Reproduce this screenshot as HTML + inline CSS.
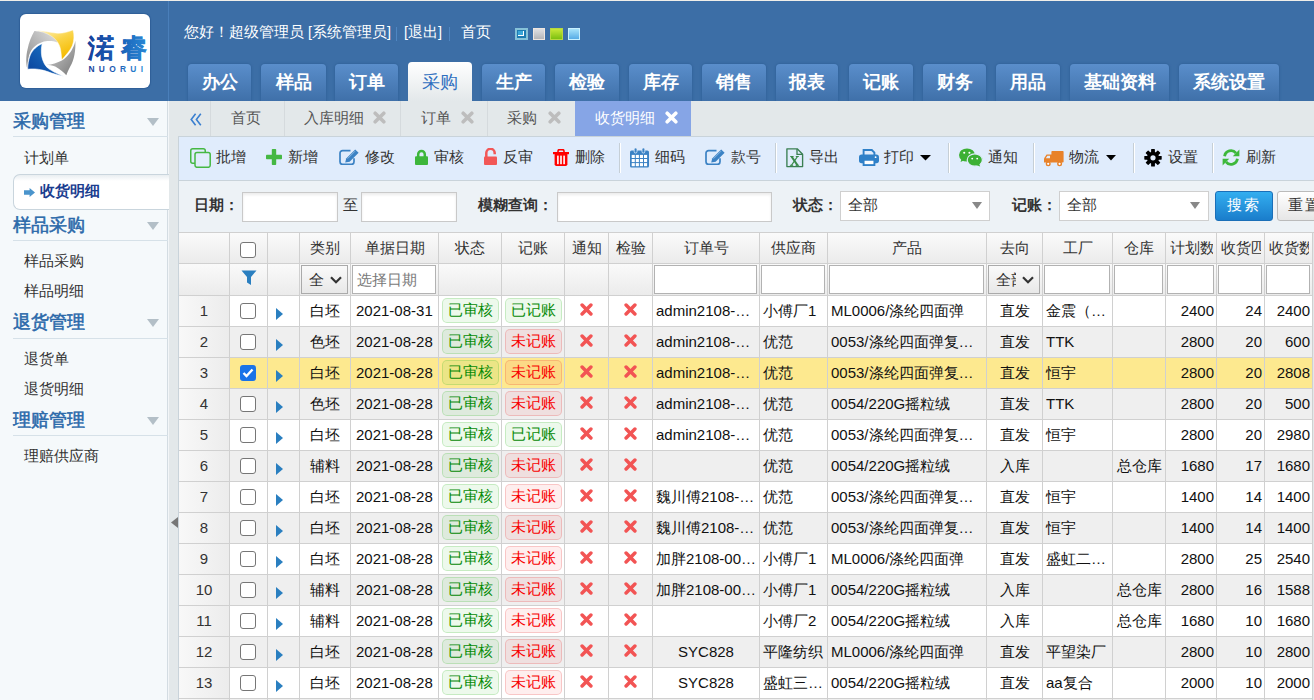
<!DOCTYPE html><html><head><meta charset="utf-8"><style>
*{box-sizing:border-box}
html,body{margin:0;padding:0}
body{width:1314px;height:700px;overflow:hidden;position:relative;font-family:"Liberation Sans",sans-serif;background:#e3e8ea;color:#333}
div,span{position:absolute;white-space:nowrap}
#hdr{left:0;top:0;width:1314px;height:101px;background:#3c6ea6;border-top:1px solid #f0eee9}
#logo{left:20px;top:14px;width:130px;height:74px;background:#fff;border-radius:6px;box-shadow:0 0 1px 1px #2f5f98}
#hsep{left:168px;top:1px;width:1px;height:100px;background:#4a7fba}
.g{top:23px;font-size:14.5px;color:#fff;line-height:18px}
.gs{top:27px;width:1px;height:14px;background:#4f86c2}
.nt{top:64px;height:37px;border-radius:4px 4px 0 0;background:linear-gradient(#5a8ecb,#3f70a9);box-shadow:0 0 2px 1px #34659c;color:#fff;font-size:18px;font-weight:bold;font-family:"Liberation Serif",serif;text-align:center;line-height:36px}
.nt.act{top:62px;height:39px;background:linear-gradient(#fff,#e3e8ea);color:#2f6fc0;font-weight:normal;box-shadow:none;line-height:40px}
#side{left:0;top:101px;width:168px;height:599px;background:#f5f9fb;border-right:1px solid #d3dce2}
.sh{left:13px;font-size:18px;color:#2b69aa;line-height:20px;-webkit-text-stroke:0.55px #2b69aa}
.sline{left:13px;width:155px;height:1px;background:#d6e1e8}
.scaret{left:147px;width:0;height:0;border-left:6.5px solid transparent;border-right:6.5px solid transparent;border-top:8px solid #b3bfc7}
.si{left:24px;font-size:14.5px;color:#333;line-height:18px}
#sact{left:13px;top:174px;width:156px;height:36px;background:linear-gradient(#e9eef1 0,#fff 6px,#fff 100%);border:1px solid #c9d5dd;border-right:none;border-radius:7px 0 0 7px}
.pt{top:109px;font-size:14.5px;color:#555;line-height:18px}
.ptx{top:111px;font-size:17px;color:#b3b3b3;font-weight:bold;line-height:14px}
.psep{top:101px;width:1px;height:35px;background:#d5dadd}
#tb{left:178px;top:136px;width:1136px;height:45px;background:#e0ecfc;border-top:1px solid #c9d3da;border-bottom:1px solid #c9d3da;border-left:1px solid #c9d3da}
.tt{top:148px;font-size:14.5px;color:#333;line-height:18px}
.tsep{top:143px;width:2px;height:30px;border-left:1px solid #c6cfd6;border-right:1px solid #fff}
#sb{left:178px;top:181px;width:1136px;height:52px;background:#edf2f6;border-left:1px solid #c9d3da;border-bottom:1px solid #c9d3da}
.lb{top:196px;font-size:14.5px;color:#333;font-weight:bold;line-height:18px}
.inp{top:192px;height:30px;background:#fff;border:1px solid #c9c9c9;box-shadow:inset 0 2px 3px rgba(0,0,0,.08)}
.sel{top:191px;height:30px;background:#fff;border:1px solid #cfcfcf}
.selt{top:196px;font-size:14.5px;color:#333;line-height:18px}
.selc{top:202px;width:0;height:0;border-left:5px solid transparent;border-right:5px solid transparent;border-top:7px solid #888}
.c{height:31px;border-right:1px solid #d0d0d0;border-bottom:1px solid #d0d0d0;font-size:15px;line-height:30px;color:#111;overflow:hidden;padding:0 3px}
.hc{background:linear-gradient(#fafafa,#ebebeb);color:#333;text-align:center}
.rn{background:linear-gradient(90deg,#f8f8f8,#ececec);color:#333;text-align:center}
.cb{width:16px;height:16px;border:1.5px solid #767676;border-radius:3px;background:#fff}
.tri{width:0;height:0;border-top:6px solid transparent;border-bottom:6px solid transparent;border-left:7px solid #2a7fc0}
.bd{height:25px;top:2px;border-radius:5px;font-size:15px;line-height:22px;text-align:center}
.ok{background:rgba(60,190,40,.09);border:1px solid rgba(60,180,40,.22);color:#058a05}
.no{background:rgba(240,40,40,.08);border:1px solid rgba(230,40,40,.2);color:#f80000}
.fi{top:1px;height:29px;background:#fff;border:1px solid #b2b2b2}
</style></head><body>
<div id="hdr"></div><div id="logo"></div><div id="hsep"></div>
<svg style="position:absolute;left:20px;top:15px" width="130" height="73" viewBox="20 15 130 73"><defs><linearGradient id="gy" x1="0" y1="0" x2="0.6" y2="1"><stop offset="0" stop-color="#fff4c8"/><stop offset="0.5" stop-color="#fad448"/><stop offset="1" stop-color="#f5bb00"/></linearGradient><linearGradient id="gg" x1="1" y1="0" x2="0" y2="1"><stop offset="0" stop-color="#e0e0e0"/><stop offset="1" stop-color="#8a8a8a"/></linearGradient><linearGradient id="gg2" x1="0" y1="0" x2="1" y2="1"><stop offset="0" stop-color="#d8d8d8"/><stop offset="1" stop-color="#787878"/></linearGradient><linearGradient id="gb" x1="1" y1="0" x2="0" y2="1"><stop offset="0" stop-color="#1e7fd0"/><stop offset="1" stop-color="#0a3f98"/></linearGradient><linearGradient id="gt" x1="0" y1="0" x2="1" y2="0"><stop offset="0" stop-color="#16409a"/><stop offset="0.45" stop-color="#1a5cb4"/><stop offset="1" stop-color="#2a92dc"/></linearGradient></defs><path d="M34.4 31.1C40 31.5 50 32 53.7 35.9C56 38 57 40.5 57.2 42.4C53 40.5 46 40.8 42.6 41.9C36 44 31 49 29.2 55C28 59 27.5 64 27.3 68.6C26 64 25.9 56 27.5 49.5C29 42 31.5 36 34.4 31.1Z" fill="url(#gg)"/><path d="M34.4 30.3C42 30.5 50 32.5 57.4 33.3C63 33.5 68 32 73 30C74.5 35 74 41 72.3 45.6C70.5 50 66 55 61.9 59.7C61.3 55 61 51 60.4 48.5C59.5 44.5 57 40 52.2 36.7C47 33 40 31 34.4 30.3Z" fill="url(#gy)" stroke="#fff" stroke-width="0.4"/><path d="M75.3 40.4C76 50 74 60 70.5 66C68.5 70 67 73 66.3 75.3C64 72.5 59.5 68.5 55.2 66.4C52 65.2 49 64.9 46.3 64.9C52 64.5 57.5 62.5 61.9 60.4C66 58 70.5 53 72.5 48.5C74 45.5 75 43 75.3 40.4Z" fill="url(#gg2)"/><path d="M42.2 43.7C38 45 32 50 29.9 56C28.5 60 27.7 65 27.7 69.3C32 68.5 38 69 42.6 70.1C48 71.5 54 74.5 64.1 76.4C59 75 52 71 48.5 68.6C45.5 66.5 43 62 41.8 56.7C41 52 41.3 47 42.2 43.7Z" fill="url(#gb)" stroke="#fff" stroke-width="0.6"/><text x="87.5" y="56.5" font-family="Liberation Sans" font-size="26" font-weight="bold" fill="url(#gt)" stroke="url(#gt)" stroke-width="0.35" letter-spacing="7">渃睿</text><text x="88.5" y="72.2" font-family="Liberation Sans" font-size="8.4" font-weight="bold" fill="url(#gt)" letter-spacing="4.3">NUORUI</text></svg>
<div class="g" style="left:184px">您好！超级管理员 [系统管理员]</div>
<div class="gs" style="left:396px"></div>
<div class="g" style="left:404px">[退出]</div>
<div class="gs" style="left:449px"></div>
<div class="g" style="left:461px">首页</div>
<div style="left:0;top:0;width:1314px;height:101px;overflow:hidden">
<div class="nt" style="left:188px;width:63px">办公</div>
<div class="nt" style="left:261px;width:65px">样品</div>
<div class="nt" style="left:335px;width:63px">订单</div>
<div class="nt act" style="left:408px;width:64px">采购</div>
<div class="nt" style="left:482px;width:63px">生产</div>
<div class="nt" style="left:555px;width:64px">检验</div>
<div class="nt" style="left:629px;width:63px">库存</div>
<div class="nt" style="left:702px;width:64px">销售</div>
<div class="nt" style="left:776px;width:62px">报表</div>
<div class="nt" style="left:849px;width:64px">记账</div>
<div class="nt" style="left:923px;width:63px">财务</div>
<div class="nt" style="left:996px;width:64px">用品</div>
<div class="nt" style="left:1070px;width:99px">基础资料</div>
<div class="nt" style="left:1179px;width:100px">系统设置</div>
</div>
<div id="side"></div><div style="left:168px;top:101px;width:1px;height:599px;background:#f3f6f8"></div>
<div class="sh" style="top:111px">采购管理</div><div class="sline" style="top:136px"></div><div class="scaret" style="top:118px"></div>
<div class="sh" style="top:215px">样品采购</div><div class="sline" style="top:240px"></div><div class="scaret" style="top:222px"></div>
<div class="sh" style="top:312px">退货管理</div><div class="sline" style="top:338px"></div><div class="scaret" style="top:319px"></div>
<div class="sh" style="top:410px">理赔管理</div><div class="sline" style="top:435px"></div><div class="scaret" style="top:417px"></div>
<div id="sact"></div>
<div class="si" style="top:149px">计划单</div>
<div class="si" style="top:252px">样品采购</div>
<div class="si" style="top:282px">样品明细</div>
<div class="si" style="top:350px">退货单</div>
<div class="si" style="top:380px">退货明细</div>
<div class="si" style="top:447px">理赔供应商</div>
<svg style="position:absolute;left:24px;top:188px" width="11" height="9" viewBox="0 0 11 9"><path d="M0 2.2H5.6V0L11 4.5L5.6 9V6.8H0Z" fill="#4a94cc"/></svg>
<svg style="position:absolute;left:171px;top:517px" width="7" height="11" viewBox="0 0 7 11"><path d="M7 0V11L0 5.5Z" fill="#777"/></svg>
<div style="left:40px;top:182px;font-size:15px;font-weight:bold;color:#1b3d8f;line-height:18px">收货明细</div>
<div style="left:575px;top:101px;width:116px;height:35px;background:#86a5e6"></div>
<div class="psep" style="left:210px"></div>
<div class="psep" style="left:284px"></div>
<div class="psep" style="left:400px"></div>
<div class="psep" style="left:487px"></div>
<div class="pt" style="left:231px">首页</div>
<div class="pt" style="left:304px">入库明细</div>
<div class="pt" style="left:421px">订单</div>
<div class="pt" style="left:507px">采购</div>
<div class="pt" style="left:595px;color:#fff">收货明细</div>
<div id="tb"></div>
<div class="tt" style="left:216px">批增</div>
<div class="tt" style="left:288px">新增</div>
<div class="tt" style="left:365px">修改</div>
<div class="tt" style="left:434px">审核</div>
<div class="tt" style="left:503px">反审</div>
<div class="tt" style="left:575px">删除</div>
<div class="tt" style="left:655px">细码</div>
<div class="tt" style="left:731px">款号</div>
<div class="tt" style="left:809px">导出</div>
<div class="tt" style="left:884px">打印</div>
<div class="tt" style="left:988px">通知</div>
<div class="tt" style="left:1069px">物流</div>
<div class="tt" style="left:1168px">设置</div>
<div class="tt" style="left:1246px">刷新</div>
<div class="tsep" style="left:619px"></div>
<div class="tsep" style="left:775px"></div>
<div class="tsep" style="left:948px"></div>
<div class="tsep" style="left:1033px"></div>
<div class="tsep" style="left:1133px"></div>
<div class="tsep" style="left:1212px"></div>
<svg style="position:absolute;left:190px;top:148px" width="21" height="20" viewBox="0 0 21 20"><rect x="0.75" y="0.75" width="14.5" height="14.5" rx="2" fill="none" stroke="#45b843" stroke-width="1.5"/><rect x="5" y="4.5" width="15.2" height="14.8" rx="2" fill="#e0ecfc" stroke="#45b843" stroke-width="1.5"/></svg>
<svg style="position:absolute;left:266px;top:149px" width="16" height="16" viewBox="0 0 16 16"><rect x="5.8" y="0" width="4.4" height="16" rx="0.8" fill="#45b843"/><rect x="0" y="5.8" width="16" height="4.4" rx="0.8" fill="#45b843"/></svg>
<svg style="position:absolute;left:339px;top:149px" width="20" height="16" viewBox="0 0 20 16"><path d="M11.5 1.6H3.6A2.6 2.6 0 0 0 1 4.2V12.8A2.6 2.6 0 0 0 3.6 15.4H12.4A2.6 2.6 0 0 0 15 12.8V9.2" stroke="#3b82c4" stroke-width="1.7" fill="none"/><path d="M6.2 13.4L7.2 9.4L16.2 0.4L19.6 3.8L10.6 12.8Z" fill="#3b82c4"/><path d="M8.6 9.6L16 2.2" stroke="#9cc3e6" stroke-width="0.8"/></svg>
<svg style="position:absolute;left:705px;top:149px" width="20" height="16" viewBox="0 0 20 16"><path d="M11.5 1.6H3.6A2.6 2.6 0 0 0 1 4.2V12.8A2.6 2.6 0 0 0 3.6 15.4H12.4A2.6 2.6 0 0 0 15 12.8V9.2" stroke="#3b82c4" stroke-width="1.7" fill="none"/><path d="M6.2 13.4L7.2 9.4L16.2 0.4L19.6 3.8L10.6 12.8Z" fill="#3b82c4"/><path d="M8.6 9.6L16 2.2" stroke="#9cc3e6" stroke-width="0.8"/></svg>
<svg style="position:absolute;left:415px;top:149px" width="13" height="16" viewBox="0 0 13 16"><path d="M3.2 8V5.3A3.3 3.3 0 0 1 9.8 5.3V8" stroke="#3db63b" stroke-width="2.5" fill="none"/><rect x="0" y="7.3" width="13" height="8.7" rx="1" fill="#3db63b"/></svg>
<svg style="position:absolute;left:484px;top:148px" width="13" height="17" viewBox="0 0 13 17"><path d="M2.3 9.5V5A4.2 4.2 0 0 1 10.7 5V6.3" stroke="#f25757" stroke-width="2.5" fill="none"/><rect x="0" y="8.6" width="13" height="8.4" rx="1" fill="#f25757"/></svg>
<svg style="position:absolute;left:553px;top:149px" width="16" height="17" viewBox="0 0 16 17"><path d="M5 3.2V2.2A1.6 1.6 0 0 1 6.6 0.6H9.4A1.6 1.6 0 0 1 11 2.2V3.2" stroke="#f00" stroke-width="1.6" fill="none"/><rect x="0" y="3" width="16" height="2.2" fill="#f00"/><path d="M1.6 5H14.4V15.2A1.8 1.8 0 0 1 12.6 17H3.4A1.8 1.8 0 0 1 1.6 15.2Z" fill="#f00"/><rect x="4.1" y="6.6" width="1.6" height="8.6" fill="#fff"/><rect x="7.2" y="6.6" width="1.6" height="8.6" fill="#fff"/><rect x="10.3" y="6.6" width="1.6" height="8.6" fill="#fff"/></svg>
<svg style="position:absolute;left:630px;top:148px" width="19" height="20" viewBox="0 0 19 20"><rect x="0" y="2.6" width="19" height="17" rx="1.6" fill="#3b82c4"/><rect x="4.2" y="0" width="2.8" height="5" rx="1.3" fill="#3b82c4" stroke="#e0ecfc" stroke-width="0.8"/><rect x="12" y="0" width="2.8" height="5" rx="1.3" fill="#3b82c4" stroke="#e0ecfc" stroke-width="0.8"/><rect x="1.7" y="6.9" width="3.1" height="3.1" fill="#fff"/><rect x="5.8" y="6.9" width="3.1" height="3.1" fill="#fff"/><rect x="9.9" y="6.9" width="3.1" height="3.1" fill="#fff"/><rect x="14.0" y="6.9" width="3.1" height="3.1" fill="#fff"/><rect x="1.7" y="11.0" width="3.1" height="3.1" fill="#fff"/><rect x="5.8" y="11.0" width="3.1" height="3.1" fill="#fff"/><rect x="9.9" y="11.0" width="3.1" height="3.1" fill="#fff"/><rect x="14.0" y="11.0" width="3.1" height="3.1" fill="#fff"/><rect x="1.7" y="15.1" width="3.1" height="3.1" fill="#fff"/><rect x="5.8" y="15.1" width="3.1" height="3.1" fill="#fff"/><rect x="9.9" y="15.1" width="3.1" height="3.1" fill="#fff"/><rect x="14.0" y="15.1" width="3.1" height="3.1" fill="#fff"/></svg>
<svg style="position:absolute;left:786px;top:148px" width="18" height="20" viewBox="0 0 18 20"><path d="M0.9 0.8H11.2L16.6 6.2V18.6H0.9Z" fill="none" stroke="#3a7f52" stroke-width="1.35" stroke-linejoin="round"/><path d="M11 0.9V6.4H16.6" fill="none" stroke="#3a7f52" stroke-width="1.3"/><path d="M5.6 8.6L11.6 17.4" stroke="#3a8a4a" stroke-width="1.9"/><path d="M11.4 8.6L5.4 17.4" stroke="#3a8a4a" stroke-width="1.1"/><path d="M4.2 8.5H7.6M9.8 8.5H12.8M3.9 17.3H7.2M9.6 17.3H13.1" stroke="#3a8a4a" stroke-width="1"/></svg>
<svg style="position:absolute;left:859px;top:149px" width="20" height="17" viewBox="0 0 20 17"><path d="M4.6 6V1H12.8L15.4 3.6V6" fill="none" stroke="#2f80c8" stroke-width="1.9"/><rect x="0" y="5.6" width="20" height="8.6" rx="2.6" fill="#2f80c8"/><rect x="4.6" y="10.8" width="10.8" height="5.3" fill="#fff" stroke="#2f80c8" stroke-width="1.9"/><circle cx="16.6" cy="8.2" r="0.9" fill="#fff"/></svg>
<svg style="position:absolute;left:920px;top:155px" width="11" height="6" viewBox="0 0 11 6"><path d="M0 0H11L5.5 5.6Z" fill="#000"/></svg>
<svg style="position:absolute;left:1106px;top:155px" width="10" height="6" viewBox="0 0 10 6"><path d="M0 0H10L5 5.4Z" fill="#000"/></svg>
<svg style="position:absolute;left:959px;top:148px" width="24" height="19" viewBox="0 0 24 19"><ellipse cx="8" cy="7" rx="8" ry="6.6" fill="#3cb034"/><path d="M2.5 10.5L1.6 14L6 11.8Z" fill="#3cb034"/><ellipse cx="15.8" cy="12" rx="7.6" ry="6.2" fill="#3cb034" stroke="#e0ecfc" stroke-width="1.2"/><path d="M20 15.5L21.2 18.6L17 17Z" fill="#3cb034"/><circle cx="5.2" cy="4.8" r="1.05" fill="#fff"/><circle cx="10.4" cy="4.8" r="1.05" fill="#fff"/><circle cx="13.2" cy="10.6" r="0.95" fill="#fff"/><circle cx="18.2" cy="10.6" r="0.95" fill="#fff"/></svg>
<svg style="position:absolute;left:1044px;top:151px" width="20" height="16" viewBox="0 0 20 16"><rect x="7.4" y="0" width="12.2" height="11.6" rx="0.8" fill="#e8822a"/><path d="M0 11.6V7.6L2.6 3.4H8V11.6Z" fill="#e8822a"/><path d="M1.8 7.2L3.4 4.8H6V7.2Z" fill="#e0ecfc"/><circle cx="4.2" cy="12.8" r="2.5" fill="#e8822a"/><circle cx="4.2" cy="12.8" r="1.1" fill="#fff"/><circle cx="15.6" cy="12.8" r="2.5" fill="#e8822a"/><circle cx="15.6" cy="12.8" r="1.1" fill="#fff"/></svg>
<svg style="position:absolute;left:1144px;top:149px" width="18" height="18" viewBox="0 0 18 18"><g transform="translate(9,8.8)"><rect x="-1.9" y="-8.7" width="3.8" height="4.5" rx="0.6" fill="#000" transform="rotate(0)"/><rect x="-1.9" y="-8.7" width="3.8" height="4.5" rx="0.6" fill="#000" transform="rotate(45)"/><rect x="-1.9" y="-8.7" width="3.8" height="4.5" rx="0.6" fill="#000" transform="rotate(90)"/><rect x="-1.9" y="-8.7" width="3.8" height="4.5" rx="0.6" fill="#000" transform="rotate(135)"/><rect x="-1.9" y="-8.7" width="3.8" height="4.5" rx="0.6" fill="#000" transform="rotate(180)"/><rect x="-1.9" y="-8.7" width="3.8" height="4.5" rx="0.6" fill="#000" transform="rotate(225)"/><rect x="-1.9" y="-8.7" width="3.8" height="4.5" rx="0.6" fill="#000" transform="rotate(270)"/><rect x="-1.9" y="-8.7" width="3.8" height="4.5" rx="0.6" fill="#000" transform="rotate(315)"/><circle r="6.1" fill="#000"/><circle r="2.6" fill="#e0ecfc"/></g></svg>
<svg style="position:absolute;left:1222px;top:149px" width="18" height="17" viewBox="0 0 18 17"><path d="M2.6 7.2A6.4 6.4 0 0 1 14 4.2" stroke="#3db83b" stroke-width="2.8" fill="none"/><path d="M17.4 0.6V7.2H10.8Z" fill="#3db83b"/><path d="M15.4 9.8A6.4 6.4 0 0 1 4 12.8" stroke="#3db83b" stroke-width="2.8" fill="none"/><path d="M0.6 16.4V9.8H7.2Z" fill="#3db83b"/></svg>
<svg style="position:absolute;left:373px;top:111px" width="13" height="13" viewBox="0 0 13 13"><path d="M2.2 2.2L10.8 10.8M10.8 2.2L2.2 10.8" stroke="#bdbdbd" stroke-width="3.6" stroke-linecap="round"/></svg>
<svg style="position:absolute;left:461px;top:111px" width="13" height="13" viewBox="0 0 13 13"><path d="M2.2 2.2L10.8 10.8M10.8 2.2L2.2 10.8" stroke="#bdbdbd" stroke-width="3.6" stroke-linecap="round"/></svg>
<svg style="position:absolute;left:548px;top:111px" width="13" height="13" viewBox="0 0 13 13"><path d="M2.2 2.2L10.8 10.8M10.8 2.2L2.2 10.8" stroke="#bdbdbd" stroke-width="3.6" stroke-linecap="round"/></svg>
<svg style="position:absolute;left:665px;top:111px" width="13" height="13" viewBox="0 0 13 13"><path d="M2.2 2.2L10.8 10.8M10.8 2.2L2.2 10.8" stroke="#fff" stroke-width="3.6" stroke-linecap="round"/></svg>
<svg style="position:absolute;left:190px;top:113px" width="12" height="13" viewBox="0 0 12 13"><path d="M5.6 0.8L1.2 6.5L5.6 12.2M10.8 0.8L6.4 6.5L10.8 12.2" stroke="#3a7fd0" stroke-width="1.6" fill="none"/></svg>
<div style="left:515px;top:28px;width:13px;height:12px;background:#1d7cb2;border:2px solid #86c2d8"><div style="left:1px;top:1px;width:6px;height:5px;background:#3aa6d8;border-right:1.5px solid #fff;border-bottom:1.5px solid #fff"></div></div>
<div style="left:533px;top:28px;width:12px;height:12px;background:linear-gradient(#dfe0e3,#b5b6b9);border:1px solid #efe6df"></div>
<div style="left:550px;top:28px;width:13px;height:12px;background:linear-gradient(#c8e838,#7cc010);border:1px solid #b8d840"></div>
<div style="left:568px;top:28px;width:12px;height:12px;background:linear-gradient(#a6e2fa,#56ace6);border:1px solid #c8f0ff"></div>
<div id="sb"></div>
<div class="lb" style="left:194px">日期：</div>
<div class="inp" style="left:242px;width:96px"></div>
<div class="selt" style="left:343px">至</div>
<div class="inp" style="left:361px;width:96px"></div>
<div class="lb" style="left:478px">模糊查询：</div>
<div class="inp" style="left:557px;width:215px"></div>
<div class="lb" style="left:793px">状态：</div>
<div class="sel" style="left:840px;width:150px"></div><div class="selt" style="left:848px">全部</div><div class="selc" style="left:972px"></div>
<div class="lb" style="left:1012px">记账：</div>
<div class="sel" style="left:1059px;width:150px"></div><div class="selt" style="left:1067px">全部</div><div class="selc" style="left:1190px"></div>
<div style="left:1215px;top:191px;width:58px;height:30px;border-radius:3px;background:linear-gradient(#33aef0,#1a7dcb);border:1px solid #1a6fb8;color:#fff;font-size:15px;line-height:26px;text-align:center;letter-spacing:2px">搜索</div>
<div style="left:1277px;top:191px;width:58px;height:30px;border-radius:3px;background:linear-gradient(#fff,#e6e6e6);border:1px solid #bbb;color:#333;font-size:15px;line-height:26px;padding-left:10px;letter-spacing:2px">重置</div>
<div style="left:178px;top:232px;width:1136px;height:1px;background:#d0d0d0"></div>
<div style="left:178px;top:232px;width:1px;height:468px;background:#c9d3da"></div>
<div class="c hc" style="left:179px;top:233px;width:51px;height:31px;"></div>
<div class="c hc" style="left:230px;top:233px;width:38px;height:31px;"><div class="cb" style="left:10px;top:9px"></div></div>
<div class="c hc" style="left:268px;top:233px;width:32px;height:31px;"></div>
<div class="c hc" style="left:300px;top:233px;width:51px;height:31px;">类别</div>
<div class="c hc" style="left:351px;top:233px;width:88px;height:31px;">单据日期</div>
<div class="c hc" style="left:439px;top:233px;width:63px;height:31px;">状态</div>
<div class="c hc" style="left:502px;top:233px;width:63px;height:31px;">记账</div>
<div class="c hc" style="left:565px;top:233px;width:44px;height:31px;">通知</div>
<div class="c hc" style="left:609px;top:233px;width:44px;height:31px;">检验</div>
<div class="c hc" style="left:653px;top:233px;width:107px;height:31px;">订单号</div>
<div class="c hc" style="left:760px;top:233px;width:68px;height:31px;">供应商</div>
<div class="c hc" style="left:828px;top:233px;width:159px;height:31px;">产品</div>
<div class="c hc" style="left:987px;top:233px;width:56px;height:31px;">去向</div>
<div class="c hc" style="left:1043px;top:233px;width:70px;height:31px;">工厂</div>
<div class="c hc" style="left:1113px;top:233px;width:53px;height:31px;">仓库</div>
<div class="c hc" style="left:1166px;top:233px;width:51px;height:31px;"><div style="left:4px;top:0;width:43px;overflow:hidden;text-align:left">计划数</div></div>
<div class="c hc" style="left:1217px;top:233px;width:48px;height:31px;"><div style="left:4px;top:0;width:40px;overflow:hidden;text-align:left">收货匹</div></div>
<div class="c hc" style="left:1265px;top:233px;width:48px;height:31px;"><div style="left:4px;top:0;width:40px;overflow:hidden;text-align:left">收货数</div></div>
<div class="c hc" style="left:179px;top:264px;width:51px;height:32px;"></div>
<div class="c hc" style="left:230px;top:264px;width:38px;height:32px;"><svg style="position:absolute;left:10.5px;top:6px" width="16" height="16" viewBox="0 0 16 16"><path d="M0.5 0.5H15.5L10 7V15L6 12.5V7Z" fill="#2a7fc0"/></svg></div>
<div class="c hc" style="left:268px;top:264px;width:32px;height:32px;"></div>
<div class="c hc" style="left:300px;top:264px;width:51px;height:32px;"><div style="left:1px;top:1px;width:47px;height:29px;border:1px solid #aaa;background:linear-gradient(#fafafa,#e8e8e8);line-height:27px;padding-left:7px;color:#333;text-align:left">全<svg style="position:absolute;left:28px;top:10px" width="12" height="8" viewBox="0 0 12 8"><path d="M1 1.2L6 6.2L11 1.2" stroke="#333" stroke-width="2.2" fill="none"/></svg></div></div>
<div class="c hc" style="left:351px;top:264px;width:88px;height:32px;"><div class="fi" style="left:1px;width:84px;line-height:27px;padding-left:4px;color:#7a7a7a;text-align:left">选择日期</div></div>
<div class="c hc" style="left:439px;top:264px;width:63px;height:32px;"></div>
<div class="c hc" style="left:502px;top:264px;width:63px;height:32px;"></div>
<div class="c hc" style="left:565px;top:264px;width:44px;height:32px;"></div>
<div class="c hc" style="left:609px;top:264px;width:44px;height:32px;"></div>
<div class="c hc" style="left:653px;top:264px;width:107px;height:32px;"><div class="fi" style="left:1px;width:103px"></div></div>
<div class="c hc" style="left:760px;top:264px;width:68px;height:32px;"><div class="fi" style="left:1px;width:64px"></div></div>
<div class="c hc" style="left:828px;top:264px;width:159px;height:32px;"><div class="fi" style="left:1px;width:155px"></div></div>
<div class="c hc" style="left:987px;top:264px;width:56px;height:32px;"><div style="left:1px;top:1px;width:52px;height:29px;border:1px solid #aaa;background:linear-gradient(#fafafa,#e8e8e8);line-height:27px;color:#333;overflow:hidden;text-align:left"><div style="left:7px;top:0;width:20px;overflow:hidden">全部</div><svg style="position:absolute;left:33px;top:10px" width="12" height="8" viewBox="0 0 12 8"><path d="M1 1.2L6 6.2L11 1.2" stroke="#333" stroke-width="2.2" fill="none"/></svg></div></div>
<div class="c hc" style="left:1043px;top:264px;width:70px;height:32px;"><div class="fi" style="left:1px;width:66px"></div></div>
<div class="c hc" style="left:1113px;top:264px;width:53px;height:32px;"><div class="fi" style="left:1px;width:49px"></div></div>
<div class="c hc" style="left:1166px;top:264px;width:51px;height:32px;"><div class="fi" style="left:1px;width:47px"></div></div>
<div class="c hc" style="left:1217px;top:264px;width:48px;height:32px;"><div class="fi" style="left:1px;width:44px"></div></div>
<div class="c hc" style="left:1265px;top:264px;width:48px;height:32px;"><div class="fi" style="left:1px;width:44px"></div></div>
<div class="c rn" style="left:179px;top:296px;width:51px;height:31px;">1</div>
<div class="c " style="left:230px;top:296px;width:38px;height:31px;background:#fff"><div class="cb" style="left:10px;top:7px"></div></div>
<div class="c " style="left:268px;top:296px;width:32px;height:31px;background:#fff"><div class="tri" style="left:8px;top:12px"></div></div>
<div class="c " style="left:300px;top:296px;width:51px;height:31px;background:#fff;text-align:center">白坯</div>
<div class="c " style="left:351px;top:296px;width:88px;height:31px;background:#fff;padding-left:5px">2021-08-31</div>
<div class="c " style="left:439px;top:296px;width:63px;height:31px;background:#fff"><div class="bd ok" style="left:3px;width:57px">已审核</div></div>
<div class="c " style="left:502px;top:296px;width:63px;height:31px;background:#fff"><div class="bd ok" style="left:3px;width:57px">已记账</div></div>
<div class="c " style="left:565px;top:296px;width:44px;height:31px;background:#fff"><svg style="position:absolute;left:15px;top:7px" width="13" height="13" viewBox="0 0 13 13"><path d="M2.1 2.1L10.9 10.9M10.9 2.1L2.1 10.9" stroke="#f25454" stroke-width="3.5" stroke-linecap="round"/></svg></div>
<div class="c " style="left:609px;top:296px;width:44px;height:31px;background:#fff"><svg style="position:absolute;left:15px;top:7px" width="13" height="13" viewBox="0 0 13 13"><path d="M2.1 2.1L10.9 10.9M10.9 2.1L2.1 10.9" stroke="#f25454" stroke-width="3.5" stroke-linecap="round"/></svg></div>
<div class="c " style="left:653px;top:296px;width:107px;height:31px;background:#fff;">admin2108-…</div>
<div class="c " style="left:760px;top:296px;width:68px;height:31px;background:#fff">小傅厂1</div>
<div class="c " style="left:828px;top:296px;width:159px;height:31px;background:#fff">ML0006/涤纶四面弹</div>
<div class="c " style="left:987px;top:296px;width:56px;height:31px;background:#fff;text-align:center">直发</div>
<div class="c " style="left:1043px;top:296px;width:70px;height:31px;background:#fff">金震（…</div>
<div class="c " style="left:1113px;top:296px;width:53px;height:31px;background:#fff;text-align:center"></div>
<div class="c " style="left:1166px;top:296px;width:51px;height:31px;background:#fff;text-align:right;padding-right:2px">2400</div>
<div class="c " style="left:1217px;top:296px;width:48px;height:31px;background:#fff;text-align:right;padding-right:2px">24</div>
<div class="c " style="left:1265px;top:296px;width:48px;height:31px;background:#fff;text-align:right;padding-right:2px">2400</div>
<div class="c rn" style="left:179px;top:327px;width:51px;height:31px;">2</div>
<div class="c " style="left:230px;top:327px;width:38px;height:31px;background:#efefef"><div class="cb" style="left:10px;top:7px"></div></div>
<div class="c " style="left:268px;top:327px;width:32px;height:31px;background:#efefef"><div class="tri" style="left:8px;top:12px"></div></div>
<div class="c " style="left:300px;top:327px;width:51px;height:31px;background:#efefef;text-align:center">色坯</div>
<div class="c " style="left:351px;top:327px;width:88px;height:31px;background:#efefef;padding-left:5px">2021-08-28</div>
<div class="c " style="left:439px;top:327px;width:63px;height:31px;background:#efefef"><div class="bd ok" style="left:3px;width:57px">已审核</div></div>
<div class="c " style="left:502px;top:327px;width:63px;height:31px;background:#efefef"><div class="bd no" style="left:3px;width:57px">未记账</div></div>
<div class="c " style="left:565px;top:327px;width:44px;height:31px;background:#efefef"><svg style="position:absolute;left:15px;top:7px" width="13" height="13" viewBox="0 0 13 13"><path d="M2.1 2.1L10.9 10.9M10.9 2.1L2.1 10.9" stroke="#f25454" stroke-width="3.5" stroke-linecap="round"/></svg></div>
<div class="c " style="left:609px;top:327px;width:44px;height:31px;background:#efefef"><svg style="position:absolute;left:15px;top:7px" width="13" height="13" viewBox="0 0 13 13"><path d="M2.1 2.1L10.9 10.9M10.9 2.1L2.1 10.9" stroke="#f25454" stroke-width="3.5" stroke-linecap="round"/></svg></div>
<div class="c " style="left:653px;top:327px;width:107px;height:31px;background:#efefef;">admin2108-…</div>
<div class="c " style="left:760px;top:327px;width:68px;height:31px;background:#efefef">优范</div>
<div class="c " style="left:828px;top:327px;width:159px;height:31px;background:#efefef">0053/涤纶四面弹复…</div>
<div class="c " style="left:987px;top:327px;width:56px;height:31px;background:#efefef;text-align:center">直发</div>
<div class="c " style="left:1043px;top:327px;width:70px;height:31px;background:#efefef">TTK</div>
<div class="c " style="left:1113px;top:327px;width:53px;height:31px;background:#efefef;text-align:center"></div>
<div class="c " style="left:1166px;top:327px;width:51px;height:31px;background:#efefef;text-align:right;padding-right:2px">2800</div>
<div class="c " style="left:1217px;top:327px;width:48px;height:31px;background:#efefef;text-align:right;padding-right:2px">20</div>
<div class="c " style="left:1265px;top:327px;width:48px;height:31px;background:#efefef;text-align:right;padding-right:2px">600</div>
<div class="c rn" style="left:179px;top:358px;width:51px;height:31px;">3</div>
<div class="c " style="left:230px;top:358px;width:38px;height:31px;background:#fde98f"><div style="left:10px;top:7px;width:16px;height:16px;border-radius:3px;background:#1a73e8"><svg style="position:absolute;left:2px;top:3px" width="12" height="10" viewBox="0 0 12 10"><path d="M1.5 5L4.5 8L10.5 1.5" stroke="#fff" stroke-width="2.4" fill="none"/></svg></div></div>
<div class="c " style="left:268px;top:358px;width:32px;height:31px;background:#fde98f"><div class="tri" style="left:8px;top:12px"></div></div>
<div class="c " style="left:300px;top:358px;width:51px;height:31px;background:#fde98f;text-align:center">白坯</div>
<div class="c " style="left:351px;top:358px;width:88px;height:31px;background:#fde98f;padding-left:5px">2021-08-28</div>
<div class="c " style="left:439px;top:358px;width:63px;height:31px;background:#fde98f"><div class="bd ok" style="left:3px;width:57px">已审核</div></div>
<div class="c " style="left:502px;top:358px;width:63px;height:31px;background:#fde98f"><div class="bd no" style="left:3px;width:57px">未记账</div></div>
<div class="c " style="left:565px;top:358px;width:44px;height:31px;background:#fde98f"><svg style="position:absolute;left:15px;top:7px" width="13" height="13" viewBox="0 0 13 13"><path d="M2.1 2.1L10.9 10.9M10.9 2.1L2.1 10.9" stroke="#f25454" stroke-width="3.5" stroke-linecap="round"/></svg></div>
<div class="c " style="left:609px;top:358px;width:44px;height:31px;background:#fde98f"><svg style="position:absolute;left:15px;top:7px" width="13" height="13" viewBox="0 0 13 13"><path d="M2.1 2.1L10.9 10.9M10.9 2.1L2.1 10.9" stroke="#f25454" stroke-width="3.5" stroke-linecap="round"/></svg></div>
<div class="c " style="left:653px;top:358px;width:107px;height:31px;background:#fde98f;">admin2108-…</div>
<div class="c " style="left:760px;top:358px;width:68px;height:31px;background:#fde98f">优范</div>
<div class="c " style="left:828px;top:358px;width:159px;height:31px;background:#fde98f">0053/涤纶四面弹复…</div>
<div class="c " style="left:987px;top:358px;width:56px;height:31px;background:#fde98f;text-align:center">直发</div>
<div class="c " style="left:1043px;top:358px;width:70px;height:31px;background:#fde98f">恒宇</div>
<div class="c " style="left:1113px;top:358px;width:53px;height:31px;background:#fde98f;text-align:center"></div>
<div class="c " style="left:1166px;top:358px;width:51px;height:31px;background:#fde98f;text-align:right;padding-right:2px">2800</div>
<div class="c " style="left:1217px;top:358px;width:48px;height:31px;background:#fde98f;text-align:right;padding-right:2px">20</div>
<div class="c " style="left:1265px;top:358px;width:48px;height:31px;background:#fde98f;text-align:right;padding-right:2px">2808</div>
<div class="c rn" style="left:179px;top:389px;width:51px;height:31px;">4</div>
<div class="c " style="left:230px;top:389px;width:38px;height:31px;background:#efefef"><div class="cb" style="left:10px;top:7px"></div></div>
<div class="c " style="left:268px;top:389px;width:32px;height:31px;background:#efefef"><div class="tri" style="left:8px;top:12px"></div></div>
<div class="c " style="left:300px;top:389px;width:51px;height:31px;background:#efefef;text-align:center">色坯</div>
<div class="c " style="left:351px;top:389px;width:88px;height:31px;background:#efefef;padding-left:5px">2021-08-28</div>
<div class="c " style="left:439px;top:389px;width:63px;height:31px;background:#efefef"><div class="bd ok" style="left:3px;width:57px">已审核</div></div>
<div class="c " style="left:502px;top:389px;width:63px;height:31px;background:#efefef"><div class="bd no" style="left:3px;width:57px">未记账</div></div>
<div class="c " style="left:565px;top:389px;width:44px;height:31px;background:#efefef"><svg style="position:absolute;left:15px;top:7px" width="13" height="13" viewBox="0 0 13 13"><path d="M2.1 2.1L10.9 10.9M10.9 2.1L2.1 10.9" stroke="#f25454" stroke-width="3.5" stroke-linecap="round"/></svg></div>
<div class="c " style="left:609px;top:389px;width:44px;height:31px;background:#efefef"><svg style="position:absolute;left:15px;top:7px" width="13" height="13" viewBox="0 0 13 13"><path d="M2.1 2.1L10.9 10.9M10.9 2.1L2.1 10.9" stroke="#f25454" stroke-width="3.5" stroke-linecap="round"/></svg></div>
<div class="c " style="left:653px;top:389px;width:107px;height:31px;background:#efefef;">admin2108-…</div>
<div class="c " style="left:760px;top:389px;width:68px;height:31px;background:#efefef">优范</div>
<div class="c " style="left:828px;top:389px;width:159px;height:31px;background:#efefef">0054/220G摇粒绒</div>
<div class="c " style="left:987px;top:389px;width:56px;height:31px;background:#efefef;text-align:center">直发</div>
<div class="c " style="left:1043px;top:389px;width:70px;height:31px;background:#efefef">TTK</div>
<div class="c " style="left:1113px;top:389px;width:53px;height:31px;background:#efefef;text-align:center"></div>
<div class="c " style="left:1166px;top:389px;width:51px;height:31px;background:#efefef;text-align:right;padding-right:2px">2800</div>
<div class="c " style="left:1217px;top:389px;width:48px;height:31px;background:#efefef;text-align:right;padding-right:2px">20</div>
<div class="c " style="left:1265px;top:389px;width:48px;height:31px;background:#efefef;text-align:right;padding-right:2px">500</div>
<div class="c rn" style="left:179px;top:420px;width:51px;height:31px;">5</div>
<div class="c " style="left:230px;top:420px;width:38px;height:31px;background:#fff"><div class="cb" style="left:10px;top:7px"></div></div>
<div class="c " style="left:268px;top:420px;width:32px;height:31px;background:#fff"><div class="tri" style="left:8px;top:12px"></div></div>
<div class="c " style="left:300px;top:420px;width:51px;height:31px;background:#fff;text-align:center">白坯</div>
<div class="c " style="left:351px;top:420px;width:88px;height:31px;background:#fff;padding-left:5px">2021-08-28</div>
<div class="c " style="left:439px;top:420px;width:63px;height:31px;background:#fff"><div class="bd ok" style="left:3px;width:57px">已审核</div></div>
<div class="c " style="left:502px;top:420px;width:63px;height:31px;background:#fff"><div class="bd ok" style="left:3px;width:57px">已记账</div></div>
<div class="c " style="left:565px;top:420px;width:44px;height:31px;background:#fff"><svg style="position:absolute;left:15px;top:7px" width="13" height="13" viewBox="0 0 13 13"><path d="M2.1 2.1L10.9 10.9M10.9 2.1L2.1 10.9" stroke="#f25454" stroke-width="3.5" stroke-linecap="round"/></svg></div>
<div class="c " style="left:609px;top:420px;width:44px;height:31px;background:#fff"><svg style="position:absolute;left:15px;top:7px" width="13" height="13" viewBox="0 0 13 13"><path d="M2.1 2.1L10.9 10.9M10.9 2.1L2.1 10.9" stroke="#f25454" stroke-width="3.5" stroke-linecap="round"/></svg></div>
<div class="c " style="left:653px;top:420px;width:107px;height:31px;background:#fff;">admin2108-…</div>
<div class="c " style="left:760px;top:420px;width:68px;height:31px;background:#fff">优范</div>
<div class="c " style="left:828px;top:420px;width:159px;height:31px;background:#fff">0053/涤纶四面弹复…</div>
<div class="c " style="left:987px;top:420px;width:56px;height:31px;background:#fff;text-align:center">直发</div>
<div class="c " style="left:1043px;top:420px;width:70px;height:31px;background:#fff">恒宇</div>
<div class="c " style="left:1113px;top:420px;width:53px;height:31px;background:#fff;text-align:center"></div>
<div class="c " style="left:1166px;top:420px;width:51px;height:31px;background:#fff;text-align:right;padding-right:2px">2800</div>
<div class="c " style="left:1217px;top:420px;width:48px;height:31px;background:#fff;text-align:right;padding-right:2px">20</div>
<div class="c " style="left:1265px;top:420px;width:48px;height:31px;background:#fff;text-align:right;padding-right:2px">2980</div>
<div class="c rn" style="left:179px;top:451px;width:51px;height:31px;">6</div>
<div class="c " style="left:230px;top:451px;width:38px;height:31px;background:#efefef"><div class="cb" style="left:10px;top:7px"></div></div>
<div class="c " style="left:268px;top:451px;width:32px;height:31px;background:#efefef"><div class="tri" style="left:8px;top:12px"></div></div>
<div class="c " style="left:300px;top:451px;width:51px;height:31px;background:#efefef;text-align:center">辅料</div>
<div class="c " style="left:351px;top:451px;width:88px;height:31px;background:#efefef;padding-left:5px">2021-08-28</div>
<div class="c " style="left:439px;top:451px;width:63px;height:31px;background:#efefef"><div class="bd ok" style="left:3px;width:57px">已审核</div></div>
<div class="c " style="left:502px;top:451px;width:63px;height:31px;background:#efefef"><div class="bd no" style="left:3px;width:57px">未记账</div></div>
<div class="c " style="left:565px;top:451px;width:44px;height:31px;background:#efefef"><svg style="position:absolute;left:15px;top:7px" width="13" height="13" viewBox="0 0 13 13"><path d="M2.1 2.1L10.9 10.9M10.9 2.1L2.1 10.9" stroke="#f25454" stroke-width="3.5" stroke-linecap="round"/></svg></div>
<div class="c " style="left:609px;top:451px;width:44px;height:31px;background:#efefef"><svg style="position:absolute;left:15px;top:7px" width="13" height="13" viewBox="0 0 13 13"><path d="M2.1 2.1L10.9 10.9M10.9 2.1L2.1 10.9" stroke="#f25454" stroke-width="3.5" stroke-linecap="round"/></svg></div>
<div class="c " style="left:653px;top:451px;width:107px;height:31px;background:#efefef;"></div>
<div class="c " style="left:760px;top:451px;width:68px;height:31px;background:#efefef">优范</div>
<div class="c " style="left:828px;top:451px;width:159px;height:31px;background:#efefef">0054/220G摇粒绒</div>
<div class="c " style="left:987px;top:451px;width:56px;height:31px;background:#efefef;text-align:center">入库</div>
<div class="c " style="left:1043px;top:451px;width:70px;height:31px;background:#efefef"></div>
<div class="c " style="left:1113px;top:451px;width:53px;height:31px;background:#efefef;text-align:center">总仓库</div>
<div class="c " style="left:1166px;top:451px;width:51px;height:31px;background:#efefef;text-align:right;padding-right:2px">1680</div>
<div class="c " style="left:1217px;top:451px;width:48px;height:31px;background:#efefef;text-align:right;padding-right:2px">17</div>
<div class="c " style="left:1265px;top:451px;width:48px;height:31px;background:#efefef;text-align:right;padding-right:2px">1680</div>
<div class="c rn" style="left:179px;top:482px;width:51px;height:31px;">7</div>
<div class="c " style="left:230px;top:482px;width:38px;height:31px;background:#fff"><div class="cb" style="left:10px;top:7px"></div></div>
<div class="c " style="left:268px;top:482px;width:32px;height:31px;background:#fff"><div class="tri" style="left:8px;top:12px"></div></div>
<div class="c " style="left:300px;top:482px;width:51px;height:31px;background:#fff;text-align:center">白坯</div>
<div class="c " style="left:351px;top:482px;width:88px;height:31px;background:#fff;padding-left:5px">2021-08-28</div>
<div class="c " style="left:439px;top:482px;width:63px;height:31px;background:#fff"><div class="bd ok" style="left:3px;width:57px">已审核</div></div>
<div class="c " style="left:502px;top:482px;width:63px;height:31px;background:#fff"><div class="bd no" style="left:3px;width:57px">未记账</div></div>
<div class="c " style="left:565px;top:482px;width:44px;height:31px;background:#fff"><svg style="position:absolute;left:15px;top:7px" width="13" height="13" viewBox="0 0 13 13"><path d="M2.1 2.1L10.9 10.9M10.9 2.1L2.1 10.9" stroke="#f25454" stroke-width="3.5" stroke-linecap="round"/></svg></div>
<div class="c " style="left:609px;top:482px;width:44px;height:31px;background:#fff"><svg style="position:absolute;left:15px;top:7px" width="13" height="13" viewBox="0 0 13 13"><path d="M2.1 2.1L10.9 10.9M10.9 2.1L2.1 10.9" stroke="#f25454" stroke-width="3.5" stroke-linecap="round"/></svg></div>
<div class="c " style="left:653px;top:482px;width:107px;height:31px;background:#fff;">魏川傅2108-…</div>
<div class="c " style="left:760px;top:482px;width:68px;height:31px;background:#fff">优范</div>
<div class="c " style="left:828px;top:482px;width:159px;height:31px;background:#fff">0053/涤纶四面弹复…</div>
<div class="c " style="left:987px;top:482px;width:56px;height:31px;background:#fff;text-align:center">直发</div>
<div class="c " style="left:1043px;top:482px;width:70px;height:31px;background:#fff">恒宇</div>
<div class="c " style="left:1113px;top:482px;width:53px;height:31px;background:#fff;text-align:center"></div>
<div class="c " style="left:1166px;top:482px;width:51px;height:31px;background:#fff;text-align:right;padding-right:2px">1400</div>
<div class="c " style="left:1217px;top:482px;width:48px;height:31px;background:#fff;text-align:right;padding-right:2px">14</div>
<div class="c " style="left:1265px;top:482px;width:48px;height:31px;background:#fff;text-align:right;padding-right:2px">1400</div>
<div class="c rn" style="left:179px;top:513px;width:51px;height:31px;">8</div>
<div class="c " style="left:230px;top:513px;width:38px;height:31px;background:#efefef"><div class="cb" style="left:10px;top:7px"></div></div>
<div class="c " style="left:268px;top:513px;width:32px;height:31px;background:#efefef"><div class="tri" style="left:8px;top:12px"></div></div>
<div class="c " style="left:300px;top:513px;width:51px;height:31px;background:#efefef;text-align:center">白坯</div>
<div class="c " style="left:351px;top:513px;width:88px;height:31px;background:#efefef;padding-left:5px">2021-08-28</div>
<div class="c " style="left:439px;top:513px;width:63px;height:31px;background:#efefef"><div class="bd ok" style="left:3px;width:57px">已审核</div></div>
<div class="c " style="left:502px;top:513px;width:63px;height:31px;background:#efefef"><div class="bd no" style="left:3px;width:57px">未记账</div></div>
<div class="c " style="left:565px;top:513px;width:44px;height:31px;background:#efefef"><svg style="position:absolute;left:15px;top:7px" width="13" height="13" viewBox="0 0 13 13"><path d="M2.1 2.1L10.9 10.9M10.9 2.1L2.1 10.9" stroke="#f25454" stroke-width="3.5" stroke-linecap="round"/></svg></div>
<div class="c " style="left:609px;top:513px;width:44px;height:31px;background:#efefef"><svg style="position:absolute;left:15px;top:7px" width="13" height="13" viewBox="0 0 13 13"><path d="M2.1 2.1L10.9 10.9M10.9 2.1L2.1 10.9" stroke="#f25454" stroke-width="3.5" stroke-linecap="round"/></svg></div>
<div class="c " style="left:653px;top:513px;width:107px;height:31px;background:#efefef;">魏川傅2108-…</div>
<div class="c " style="left:760px;top:513px;width:68px;height:31px;background:#efefef">优范</div>
<div class="c " style="left:828px;top:513px;width:159px;height:31px;background:#efefef">0053/涤纶四面弹复…</div>
<div class="c " style="left:987px;top:513px;width:56px;height:31px;background:#efefef;text-align:center">直发</div>
<div class="c " style="left:1043px;top:513px;width:70px;height:31px;background:#efefef">恒宇</div>
<div class="c " style="left:1113px;top:513px;width:53px;height:31px;background:#efefef;text-align:center"></div>
<div class="c " style="left:1166px;top:513px;width:51px;height:31px;background:#efefef;text-align:right;padding-right:2px">1400</div>
<div class="c " style="left:1217px;top:513px;width:48px;height:31px;background:#efefef;text-align:right;padding-right:2px">14</div>
<div class="c " style="left:1265px;top:513px;width:48px;height:31px;background:#efefef;text-align:right;padding-right:2px">1400</div>
<div class="c rn" style="left:179px;top:544px;width:51px;height:31px;">9</div>
<div class="c " style="left:230px;top:544px;width:38px;height:31px;background:#fff"><div class="cb" style="left:10px;top:7px"></div></div>
<div class="c " style="left:268px;top:544px;width:32px;height:31px;background:#fff"><div class="tri" style="left:8px;top:12px"></div></div>
<div class="c " style="left:300px;top:544px;width:51px;height:31px;background:#fff;text-align:center">白坯</div>
<div class="c " style="left:351px;top:544px;width:88px;height:31px;background:#fff;padding-left:5px">2021-08-28</div>
<div class="c " style="left:439px;top:544px;width:63px;height:31px;background:#fff"><div class="bd ok" style="left:3px;width:57px">已审核</div></div>
<div class="c " style="left:502px;top:544px;width:63px;height:31px;background:#fff"><div class="bd no" style="left:3px;width:57px">未记账</div></div>
<div class="c " style="left:565px;top:544px;width:44px;height:31px;background:#fff"><svg style="position:absolute;left:15px;top:7px" width="13" height="13" viewBox="0 0 13 13"><path d="M2.1 2.1L10.9 10.9M10.9 2.1L2.1 10.9" stroke="#f25454" stroke-width="3.5" stroke-linecap="round"/></svg></div>
<div class="c " style="left:609px;top:544px;width:44px;height:31px;background:#fff"><svg style="position:absolute;left:15px;top:7px" width="13" height="13" viewBox="0 0 13 13"><path d="M2.1 2.1L10.9 10.9M10.9 2.1L2.1 10.9" stroke="#f25454" stroke-width="3.5" stroke-linecap="round"/></svg></div>
<div class="c " style="left:653px;top:544px;width:107px;height:31px;background:#fff;">加胖2108-00…</div>
<div class="c " style="left:760px;top:544px;width:68px;height:31px;background:#fff">小傅厂1</div>
<div class="c " style="left:828px;top:544px;width:159px;height:31px;background:#fff">ML0006/涤纶四面弹</div>
<div class="c " style="left:987px;top:544px;width:56px;height:31px;background:#fff;text-align:center">直发</div>
<div class="c " style="left:1043px;top:544px;width:70px;height:31px;background:#fff">盛虹二…</div>
<div class="c " style="left:1113px;top:544px;width:53px;height:31px;background:#fff;text-align:center"></div>
<div class="c " style="left:1166px;top:544px;width:51px;height:31px;background:#fff;text-align:right;padding-right:2px">2800</div>
<div class="c " style="left:1217px;top:544px;width:48px;height:31px;background:#fff;text-align:right;padding-right:2px">25</div>
<div class="c " style="left:1265px;top:544px;width:48px;height:31px;background:#fff;text-align:right;padding-right:2px">2540</div>
<div class="c rn" style="left:179px;top:575px;width:51px;height:31px;">10</div>
<div class="c " style="left:230px;top:575px;width:38px;height:31px;background:#efefef"><div class="cb" style="left:10px;top:7px"></div></div>
<div class="c " style="left:268px;top:575px;width:32px;height:31px;background:#efefef"><div class="tri" style="left:8px;top:12px"></div></div>
<div class="c " style="left:300px;top:575px;width:51px;height:31px;background:#efefef;text-align:center">辅料</div>
<div class="c " style="left:351px;top:575px;width:88px;height:31px;background:#efefef;padding-left:5px">2021-08-28</div>
<div class="c " style="left:439px;top:575px;width:63px;height:31px;background:#efefef"><div class="bd ok" style="left:3px;width:57px">已审核</div></div>
<div class="c " style="left:502px;top:575px;width:63px;height:31px;background:#efefef"><div class="bd no" style="left:3px;width:57px">未记账</div></div>
<div class="c " style="left:565px;top:575px;width:44px;height:31px;background:#efefef"><svg style="position:absolute;left:15px;top:7px" width="13" height="13" viewBox="0 0 13 13"><path d="M2.1 2.1L10.9 10.9M10.9 2.1L2.1 10.9" stroke="#f25454" stroke-width="3.5" stroke-linecap="round"/></svg></div>
<div class="c " style="left:609px;top:575px;width:44px;height:31px;background:#efefef"><svg style="position:absolute;left:15px;top:7px" width="13" height="13" viewBox="0 0 13 13"><path d="M2.1 2.1L10.9 10.9M10.9 2.1L2.1 10.9" stroke="#f25454" stroke-width="3.5" stroke-linecap="round"/></svg></div>
<div class="c " style="left:653px;top:575px;width:107px;height:31px;background:#efefef;">加胖2108-00…</div>
<div class="c " style="left:760px;top:575px;width:68px;height:31px;background:#efefef">小傅厂1</div>
<div class="c " style="left:828px;top:575px;width:159px;height:31px;background:#efefef">0054/220G摇粒绒</div>
<div class="c " style="left:987px;top:575px;width:56px;height:31px;background:#efefef;text-align:center">入库</div>
<div class="c " style="left:1043px;top:575px;width:70px;height:31px;background:#efefef"></div>
<div class="c " style="left:1113px;top:575px;width:53px;height:31px;background:#efefef;text-align:center">总仓库</div>
<div class="c " style="left:1166px;top:575px;width:51px;height:31px;background:#efefef;text-align:right;padding-right:2px">2800</div>
<div class="c " style="left:1217px;top:575px;width:48px;height:31px;background:#efefef;text-align:right;padding-right:2px">16</div>
<div class="c " style="left:1265px;top:575px;width:48px;height:31px;background:#efefef;text-align:right;padding-right:2px">1588</div>
<div class="c rn" style="left:179px;top:606px;width:51px;height:31px;">11</div>
<div class="c " style="left:230px;top:606px;width:38px;height:31px;background:#fff"><div class="cb" style="left:10px;top:7px"></div></div>
<div class="c " style="left:268px;top:606px;width:32px;height:31px;background:#fff"><div class="tri" style="left:8px;top:12px"></div></div>
<div class="c " style="left:300px;top:606px;width:51px;height:31px;background:#fff;text-align:center">辅料</div>
<div class="c " style="left:351px;top:606px;width:88px;height:31px;background:#fff;padding-left:5px">2021-08-28</div>
<div class="c " style="left:439px;top:606px;width:63px;height:31px;background:#fff"><div class="bd ok" style="left:3px;width:57px">已审核</div></div>
<div class="c " style="left:502px;top:606px;width:63px;height:31px;background:#fff"><div class="bd no" style="left:3px;width:57px">未记账</div></div>
<div class="c " style="left:565px;top:606px;width:44px;height:31px;background:#fff"><svg style="position:absolute;left:15px;top:7px" width="13" height="13" viewBox="0 0 13 13"><path d="M2.1 2.1L10.9 10.9M10.9 2.1L2.1 10.9" stroke="#f25454" stroke-width="3.5" stroke-linecap="round"/></svg></div>
<div class="c " style="left:609px;top:606px;width:44px;height:31px;background:#fff"><svg style="position:absolute;left:15px;top:7px" width="13" height="13" viewBox="0 0 13 13"><path d="M2.1 2.1L10.9 10.9M10.9 2.1L2.1 10.9" stroke="#f25454" stroke-width="3.5" stroke-linecap="round"/></svg></div>
<div class="c " style="left:653px;top:606px;width:107px;height:31px;background:#fff;"></div>
<div class="c " style="left:760px;top:606px;width:68px;height:31px;background:#fff">小傅厂2</div>
<div class="c " style="left:828px;top:606px;width:159px;height:31px;background:#fff">0054/220G摇粒绒</div>
<div class="c " style="left:987px;top:606px;width:56px;height:31px;background:#fff;text-align:center">入库</div>
<div class="c " style="left:1043px;top:606px;width:70px;height:31px;background:#fff"></div>
<div class="c " style="left:1113px;top:606px;width:53px;height:31px;background:#fff;text-align:center">总仓库</div>
<div class="c " style="left:1166px;top:606px;width:51px;height:31px;background:#fff;text-align:right;padding-right:2px">1680</div>
<div class="c " style="left:1217px;top:606px;width:48px;height:31px;background:#fff;text-align:right;padding-right:2px">10</div>
<div class="c " style="left:1265px;top:606px;width:48px;height:31px;background:#fff;text-align:right;padding-right:2px">1680</div>
<div class="c rn" style="left:179px;top:637px;width:51px;height:31px;">12</div>
<div class="c " style="left:230px;top:637px;width:38px;height:31px;background:#efefef"><div class="cb" style="left:10px;top:7px"></div></div>
<div class="c " style="left:268px;top:637px;width:32px;height:31px;background:#efefef"><div class="tri" style="left:8px;top:12px"></div></div>
<div class="c " style="left:300px;top:637px;width:51px;height:31px;background:#efefef;text-align:center">白坯</div>
<div class="c " style="left:351px;top:637px;width:88px;height:31px;background:#efefef;padding-left:5px">2021-08-28</div>
<div class="c " style="left:439px;top:637px;width:63px;height:31px;background:#efefef"><div class="bd ok" style="left:3px;width:57px">已审核</div></div>
<div class="c " style="left:502px;top:637px;width:63px;height:31px;background:#efefef"><div class="bd no" style="left:3px;width:57px">未记账</div></div>
<div class="c " style="left:565px;top:637px;width:44px;height:31px;background:#efefef"><svg style="position:absolute;left:15px;top:7px" width="13" height="13" viewBox="0 0 13 13"><path d="M2.1 2.1L10.9 10.9M10.9 2.1L2.1 10.9" stroke="#f25454" stroke-width="3.5" stroke-linecap="round"/></svg></div>
<div class="c " style="left:609px;top:637px;width:44px;height:31px;background:#efefef"><svg style="position:absolute;left:15px;top:7px" width="13" height="13" viewBox="0 0 13 13"><path d="M2.1 2.1L10.9 10.9M10.9 2.1L2.1 10.9" stroke="#f25454" stroke-width="3.5" stroke-linecap="round"/></svg></div>
<div class="c " style="left:653px;top:637px;width:107px;height:31px;background:#efefef;text-align:center">SYC828</div>
<div class="c " style="left:760px;top:637px;width:68px;height:31px;background:#efefef">平隆纺织</div>
<div class="c " style="left:828px;top:637px;width:159px;height:31px;background:#efefef">ML0006/涤纶四面弹</div>
<div class="c " style="left:987px;top:637px;width:56px;height:31px;background:#efefef;text-align:center">直发</div>
<div class="c " style="left:1043px;top:637px;width:70px;height:31px;background:#efefef">平望染厂</div>
<div class="c " style="left:1113px;top:637px;width:53px;height:31px;background:#efefef;text-align:center"></div>
<div class="c " style="left:1166px;top:637px;width:51px;height:31px;background:#efefef;text-align:right;padding-right:2px">2800</div>
<div class="c " style="left:1217px;top:637px;width:48px;height:31px;background:#efefef;text-align:right;padding-right:2px">10</div>
<div class="c " style="left:1265px;top:637px;width:48px;height:31px;background:#efefef;text-align:right;padding-right:2px">2800</div>
<div class="c rn" style="left:179px;top:668px;width:51px;height:31px;">13</div>
<div class="c " style="left:230px;top:668px;width:38px;height:31px;background:#fff"><div class="cb" style="left:10px;top:7px"></div></div>
<div class="c " style="left:268px;top:668px;width:32px;height:31px;background:#fff"><div class="tri" style="left:8px;top:12px"></div></div>
<div class="c " style="left:300px;top:668px;width:51px;height:31px;background:#fff;text-align:center">白坯</div>
<div class="c " style="left:351px;top:668px;width:88px;height:31px;background:#fff;padding-left:5px">2021-08-28</div>
<div class="c " style="left:439px;top:668px;width:63px;height:31px;background:#fff"><div class="bd ok" style="left:3px;width:57px">已审核</div></div>
<div class="c " style="left:502px;top:668px;width:63px;height:31px;background:#fff"><div class="bd no" style="left:3px;width:57px">未记账</div></div>
<div class="c " style="left:565px;top:668px;width:44px;height:31px;background:#fff"><svg style="position:absolute;left:15px;top:7px" width="13" height="13" viewBox="0 0 13 13"><path d="M2.1 2.1L10.9 10.9M10.9 2.1L2.1 10.9" stroke="#f25454" stroke-width="3.5" stroke-linecap="round"/></svg></div>
<div class="c " style="left:609px;top:668px;width:44px;height:31px;background:#fff"><svg style="position:absolute;left:15px;top:7px" width="13" height="13" viewBox="0 0 13 13"><path d="M2.1 2.1L10.9 10.9M10.9 2.1L2.1 10.9" stroke="#f25454" stroke-width="3.5" stroke-linecap="round"/></svg></div>
<div class="c " style="left:653px;top:668px;width:107px;height:31px;background:#fff;text-align:center">SYC828</div>
<div class="c " style="left:760px;top:668px;width:68px;height:31px;background:#fff">盛虹三…</div>
<div class="c " style="left:828px;top:668px;width:159px;height:31px;background:#fff">0054/220G摇粒绒</div>
<div class="c " style="left:987px;top:668px;width:56px;height:31px;background:#fff;text-align:center">直发</div>
<div class="c " style="left:1043px;top:668px;width:70px;height:31px;background:#fff">aa复合</div>
<div class="c " style="left:1113px;top:668px;width:53px;height:31px;background:#fff;text-align:center"></div>
<div class="c " style="left:1166px;top:668px;width:51px;height:31px;background:#fff;text-align:right;padding-right:2px">2000</div>
<div class="c " style="left:1217px;top:668px;width:48px;height:31px;background:#fff;text-align:right;padding-right:2px">10</div>
<div class="c " style="left:1265px;top:668px;width:48px;height:31px;background:#fff;text-align:right;padding-right:2px">2000</div>
<div class="c rn" style="left:179px;top:699px;width:51px;height:31px;">14</div>
<div class="c " style="left:230px;top:699px;width:38px;height:31px;background:#efefef"><div class="cb" style="left:10px;top:7px"></div></div>
<div class="c " style="left:268px;top:699px;width:32px;height:31px;background:#efefef"><div class="tri" style="left:8px;top:12px"></div></div>
<div class="c " style="left:300px;top:699px;width:51px;height:31px;background:#efefef;text-align:center">白坯</div>
<div class="c " style="left:351px;top:699px;width:88px;height:31px;background:#efefef;padding-left:5px">2021-08-28</div>
<div class="c " style="left:439px;top:699px;width:63px;height:31px;background:#efefef"><div class="bd ok" style="left:3px;width:57px">已审核</div></div>
<div class="c " style="left:502px;top:699px;width:63px;height:31px;background:#efefef"><div class="bd no" style="left:3px;width:57px">未记账</div></div>
<div class="c " style="left:565px;top:699px;width:44px;height:31px;background:#efefef"><svg style="position:absolute;left:15px;top:7px" width="13" height="13" viewBox="0 0 13 13"><path d="M2.1 2.1L10.9 10.9M10.9 2.1L2.1 10.9" stroke="#f25454" stroke-width="3.5" stroke-linecap="round"/></svg></div>
<div class="c " style="left:609px;top:699px;width:44px;height:31px;background:#efefef"><svg style="position:absolute;left:15px;top:7px" width="13" height="13" viewBox="0 0 13 13"><path d="M2.1 2.1L10.9 10.9M10.9 2.1L2.1 10.9" stroke="#f25454" stroke-width="3.5" stroke-linecap="round"/></svg></div>
<div class="c " style="left:653px;top:699px;width:107px;height:31px;background:#efefef;text-align:center">SYC828</div>
<div class="c " style="left:760px;top:699px;width:68px;height:31px;background:#efefef">盛虹三…</div>
<div class="c " style="left:828px;top:699px;width:159px;height:31px;background:#efefef">0054/220G摇粒绒</div>
<div class="c " style="left:987px;top:699px;width:56px;height:31px;background:#efefef;text-align:center">直发</div>
<div class="c " style="left:1043px;top:699px;width:70px;height:31px;background:#efefef">aa复合</div>
<div class="c " style="left:1113px;top:699px;width:53px;height:31px;background:#efefef;text-align:center"></div>
<div class="c " style="left:1166px;top:699px;width:51px;height:31px;background:#efefef;text-align:right;padding-right:2px">2000</div>
<div class="c " style="left:1217px;top:699px;width:48px;height:31px;background:#efefef;text-align:right;padding-right:2px">10</div>
<div class="c " style="left:1265px;top:699px;width:48px;height:31px;background:#efefef;text-align:right;padding-right:2px">2000</div>
</body></html>
